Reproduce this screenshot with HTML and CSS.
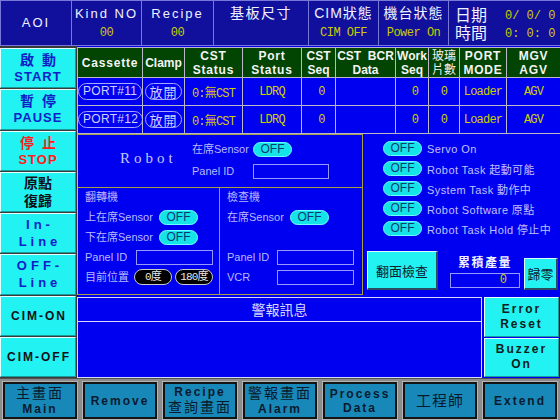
FILE: index.html
```html
<!DOCTYPE html>
<html lang="zh-Hant">
<head>
<meta charset="utf-8">
<title>AOI</title>
<link rel="stylesheet" href="styles.css">
</head>
<body>
<div class="screen">
  <header class="hdr">
    <div class="hc hc-center"><span class="ht">AOI</span></div>
    <div class="hc"><span class="ht">Kind NO</span><span class="hv">00</span></div>
    <div class="hc"><span class="ht">Recipe</span><span class="hv">00</span></div>
    <div class="hc hc-top"><span class="htl wide">基板尺寸</span></div>
    <div class="hc"><span class="htl">CIM狀態</span><span class="hv">CIM OFF</span></div>
    <div class="hc"><span class="htl">機台狀態</span><span class="hv">Power On</span></div>
    <div class="hc-date">
      <span class="dl">日期</span><span class="dv">0/ 0/ 0</span>
      <span class="dl">時間</span><span class="dv">0: 0: 0</span>
    </div>
  </header>

  <div class="mid">
    <nav class="side">
      <button class="sbtn blue"><span class="cj">啟動</span><span class="en">START</span></button>
      <button class="sbtn blue"><span class="cj">暫停</span><span class="en">PAUSE</span></button>
      <button class="sbtn red"><span class="cj">停止</span><span class="en">STOP</span></button>
      <button class="sbtn dark"><span class="cj tight">原點</span><span class="cj tight">復歸</span></button>
      <button class="sbtn blue"><span class="ln">In-</span><span class="ln">Line</span></button>
      <button class="sbtn blue"><span class="ln">OFF-</span><span class="ln">Line</span></button>
      <button class="sbtn dark"><span class="one">CIM-ON</span></button>
      <button class="sbtn dark"><span class="one">CIM-OFF</span></button>
    </nav>

    <main class="content">
      <div class="tablewrap">
        <table class="ports">
          <colgroup>
            <col style="width:65px"><col style="width:42px"><col style="width:58px"><col style="width:59px"><col style="width:34px">
            <col style="width:60px"><col style="width:33px"><col style="width:31px"><col style="width:47px"><col style="width:54px">
          </colgroup>
          <thead>
            <tr>
              <th>Cassette</th><th class="tight">Clamp</th><th>CST<br>Status</th><th>Port<br>Status</th><th class="tight">CST<br>Seq</th>
              <th class="tight">CST&nbsp; BCR<br>Data</th><th class="tight">Work<br>Seq</th><th class="cjk">玻璃<br>片數</th><th>PORT<br>MODE</th><th>MGV<br>AGV</th>
            </tr>
          </thead>
          <tbody>
            <tr>
              <td><span class="opill">PORT#11</span></td><td><span class="opill cj">放開</span></td>
              <td>0:無CST</td><td>LDRQ</td><td class="num">0</td><td></td><td class="num">0</td><td>0</td><td>Loader</td><td>AGV</td>
            </tr>
            <tr>
              <td><span class="opill">PORT#12</span></td><td><span class="opill cj">放開</span></td>
              <td>0:無CST</td><td>LDRQ</td><td class="num">0</td><td></td><td class="num">0</td><td>0</td><td>Loader</td><td>AGV</td>
            </tr>
          </tbody>
        </table>
      </div>

      <section class="robotrow">
        <div class="robot">
          <div class="rtop">
            <div class="rname">Robot</div>
            <div class="rfields">
              <span class="lbl">在席Sensor</span><span class="sw">OFF</span>
              <span class="lbl">Panel ID</span><span class="box w76"></span>
            </div>
          </div>
          <div class="rbot">
            <div class="flip">
              <div class="frow"><span class="lbl">翻轉機</span></div>
              <div class="frow"><span class="lbl w74">上在席Sensor</span><span class="sw">OFF</span></div>
              <div class="frow"><span class="lbl w74">下在席Sensor</span><span class="sw">OFF</span></div>
              <div class="frow"><span class="lbl w51">Panel ID</span><span class="box w77"></span></div>
              <div class="frow"><span class="lbl w49">目前位置</span><span class="ang">0度</span><span class="ang">180度</span></div>
            </div>
            <div class="insp">
              <div class="frow"><span class="lbl">檢查機</span></div>
              <div class="frow"><span class="lbl w63">在席Sensor</span><span class="sw">OFF</span></div>
              <div class="frow"></div>
              <div class="frow"><span class="lbl w50">Panel ID</span><span class="box w77"></span></div>
              <div class="frow"><span class="lbl w50">VCR</span><span class="box w77"></span></div>
            </div>
          </div>
        </div>

        <div class="status">
          <ul class="slist">
            <li><span class="sw">OFF</span><span class="stext">Servo On</span></li>
            <li><span class="sw">OFF</span><span class="stext">Robot Task 起動可能</span></li>
            <li><span class="sw">OFF</span><span class="stext">System Task 動作中</span></li>
            <li><span class="sw">OFF</span><span class="stext">Robot Software 原點</span></li>
            <li><span class="sw">OFF</span><span class="stext">Robot Task Hold 停止中</span></li>
          </ul>
          <div class="actions">
            <button class="cbtn flipbtn">翻面檢查</button>
            <div class="counter">
              <span class="clbl">累積產量</span>
              <span class="cbox">0</span>
            </div>
            <button class="cbtn zero">歸零</button>
          </div>
        </div>
      </section>

      <section class="alarmrow">
        <div class="alarm">
          <div class="ahead">警報訊息</div>
          <div class="abody"></div>
        </div>
        <div class="abtns">
          <button class="abtn">Error<br>Reset</button>
          <button class="abtn">Buzzer<br>On</button>
        </div>
      </section>
    </main>
  </div>

  <footer class="foot">
    <button class="fbtn"><span class="fcj">主畫面</span><span>Main</span></button>
    <button class="fbtn">Remove</button>
    <button class="fbtn"><span>Recipe</span><span class="fcj">查詢畫面</span></button>
    <button class="fbtn"><span class="fcj">警報畫面</span><span>Alarm</span></button>
    <button class="fbtn"><span>Process</span><span>Data</span></button>
    <button class="fbtn"><span class="fcj big">工程師</span></button>
    <button class="fbtn">Extend</button>
  </footer>
</div>
</body>
</html>
```

FILE: styles.css
```css
* { box-sizing: border-box; margin: 0; padding: 0; }

body {
  width: 560px;
  height: 420px;
  overflow: hidden;
  background: #0000f0;
  font-family: "Liberation Sans", "Noto Sans CJK TC", sans-serif;
  color: #c8c8ff;
}

button { font-family: inherit; cursor: default; }

.screen {
  display: grid;
  grid-template-rows: 46px 332px 42px;
  height: 420px;
}

/* ---------- header ---------- */
.hdr {
  display: grid;
  grid-template-columns: 70px 70px 72px 95px 70px 70px 111px;
  background: #10109c;
  border: 1px solid #7878d8;
}
.hc {
  border-left: 1px solid #7878d8;
  display: flex;
  flex-direction: column;
  align-items: center;
  justify-content: space-between;
  padding: 5px 0 5px;
}
.hc:first-child { border-left: none; }
.hc-center { justify-content: center; padding-bottom: 5px; }
.hc-top { justify-content: flex-start; padding-top: 5px; }
.ht {
  font-size: 13px;
  line-height: 16px;
  letter-spacing: 2px;
  color: #f0f0ff;
}
.htl {
  font-size: 14px;
  line-height: 18px;
  letter-spacing: 1px;
  color: #f0f0ff;
  margin-top: -2px;
}
.htl.wide { letter-spacing: 1.5px; }
.hv {
  font-family: "Liberation Mono", monospace;
  font-size: 12px;
  line-height: 14px;
  letter-spacing: -0.5px;
  color: #cccc00;
}
.hc-date {
  border-left: 1px solid #7878d8;
  display: grid;
  grid-template-columns: 50px 1fr;
  grid-template-rows: 18px 18px;
  align-items: center;
  padding: 6px 6px 0 6px;
}
.dl {
  font-size: 16px;
  line-height: 18px;
  color: #f0f0ff;
}
.dv {
  font-family: "Liberation Mono", monospace;
  font-size: 12px;
  line-height: 14px;
  color: #cccc00;
  text-align: right;
  white-space: pre;
}

/* ---------- middle ---------- */
.mid {
  display: grid;
  grid-template-columns: 77px 1fr;
}

.side {
  display: flex;
  flex-direction: column;
  gap: 1px;
  padding: 2px 1px 1px 0;
  background: #3a3a3a;
}
.sbtn {
  flex: 1;
  background: #22f2f2;
  border-top: 1px solid #e6ffff;
  border-left: 1px solid #e6ffff;
  border-bottom: 1px solid #1a9a9a;
  border-right: 1px solid #1a9a9a;
  display: flex;
  flex-direction: column;
  align-items: center;
  justify-content: center;
}
.sbtn .cj {
  font-family: "Liberation Sans", "Noto Sans CJK TC", sans-serif;
  font-size: 14px;
  line-height: 18px;
  letter-spacing: 8px;
  margin-right: -8px;
  font-weight: bold;
}
.sbtn .cj.tight {
  letter-spacing: 0;
  margin-right: 0;
  font-size: 14px;
  line-height: 18px;
}
.sbtn .en {
  font-size: 13px;
  line-height: 16px;
  font-weight: bold;
  letter-spacing: 1px;
}
.sbtn .ln {
  font-size: 13px;
  line-height: 17px;
  letter-spacing: 4px;
  margin-right: -4px;
  font-weight: bold;
}
.sbtn .one {
  font-size: 12px;
  font-weight: bold;
  letter-spacing: 2px;
  margin-right: -2px;
}
.sbtn.blue { color: #1020c8; }
.sbtn.red { color: #ff1c1c; }
.sbtn.dark { color: #101018; }

.content {
  display: grid;
  grid-template-rows: 88px 162px 82px;
  background: #0000f0;
}

/* ---------- port table ---------- */
.tablewrap { padding-top: 1px; }
.ports {
  border-collapse: collapse;
  table-layout: fixed;
  width: 483px;
}
.ports th, .ports td {
  border: 1px solid #b8b8c8;
  text-align: center;
  overflow: hidden;
  white-space: nowrap;
}
.ports th {
  background: #024402;
  color: #f4f4f4;
  font-size: 12px;
  font-weight: bold;
  line-height: 14px;
  letter-spacing: 0.8px;
  height: 30px;
  padding: 0;
}
.ports th.tight { letter-spacing: 0; }
.ports th.cjk {
  font-family: "Liberation Sans", "Noto Sans CJK TC", sans-serif;
  font-size: 12px;
  font-weight: normal;
  letter-spacing: 0;
  line-height: 14px;
}
.ports td {
  background: #0000f0;
  height: 28px;
  color: #d0d000;
  font-family: "Liberation Mono", "Noto Sans CJK TC", monospace;
  font-size: 12px;
  letter-spacing: -0.8px;
  padding: 0;
}
.ports td.num { padding-left: 6px; }
.opill {
  display: inline-block;
  height: 17px;
  line-height: 15px;
  padding: 0 4px;
  border: 1px solid #a8a8ff;
  border-radius: 9px;
  color: #d0d0ff;
  font-family: "Liberation Sans", sans-serif;
  font-size: 12px;
  letter-spacing: 0.3px;
}
.opill.cj {
  font-family: "Noto Sans CJK TC", sans-serif;
  font-size: 13px;
  letter-spacing: 1px;
  padding: 0 3px;
}

/* ---------- robot ---------- */
.robotrow {
  display: grid;
  grid-template-columns: 286px 1fr;
}
.robot {
  display: grid;
  grid-template-rows: 53px 1fr;
  border-top: 1px solid #a8a040;
  border-right: 1px solid #a8a040;
  border-bottom: 1px solid #a8a040;
  border-left: 1px solid #b8b8c8;
  margin-bottom: 1px;
}
.rtop {
  display: flex;
  border-bottom: 1px solid #a8a040;
}
.rname {
  width: 114px;
  padding-left: 42px;
  padding-top: 15px;
  font-family: "Liberation Serif", serif;
  font-size: 15px;
  letter-spacing: 4px;
  color: #c8c8ff;
}
.rfields {
  display: grid;
  grid-template-columns: 61px auto;
  grid-template-rows: 15px 15px;
  row-gap: 7px;
  align-items: center;
  padding-top: 7px;
}
.lbl {
  font-size: 11px;
  line-height: 15px;
  color: #b8b8ff;
  white-space: nowrap;
}
.w74 { width: 74px; }
.w63 { width: 63px; }
.w51 { width: 51px; }
.w50 { width: 50px; }
.w49 { width: 49px; }

.sw {
  display: inline-block;
  flex: none;
  width: 39px;
  height: 15px;
  border-radius: 8px;
  background: #14e4e8;
  border: 1px solid #70ffff;
  color: #103870;
  font-size: 12px;
  line-height: 13px;
  text-align: center;
}
.box {
  display: inline-block;
  flex: none;
  height: 15px;
  border: 1px solid #9898ff;
}
.box.w76 { width: 76px; }
.box.w77 { width: 77px; }

.rbot {
  display: grid;
  grid-template-columns: 142px 1fr;
}
.flip, .insp {
  display: grid;
  grid-template-rows: repeat(5, 16px);
  row-gap: 4px;
  padding: 1px 0 0 7px;
  align-content: start;
}
.flip { border-right: 1px solid #a8a040; }
.frow {
  display: flex;
  align-items: center;
  height: 16px;
}
.ang {
  display: inline-block;
  flex: none;
  width: 38px;
  height: 16px;
  margin-right: 3px;
  border-radius: 8px;
  background: #000;
  border: 1px solid #c8c8c8;
  color: #e8e8e8;
  font-family: "Liberation Mono", "Noto Sans CJK TC", monospace;
  font-size: 11px;
  letter-spacing: -0.8px;
  line-height: 14px;
  text-align: center;
}

/* ---------- status ---------- */
.status {
  display: flex;
  flex-direction: column;
  padding: 7px 0 6px 4px;
}
.slist {
  list-style: none;
  display: flex;
  flex-direction: column;
  gap: 5px;
  padding-left: 16px;
}
.slist li {
  display: flex;
  align-items: center;
  gap: 5px;
  height: 15px;
}
.stext {
  font-size: 11px;
  color: #c0c0ff;
  white-space: nowrap;
  letter-spacing: 0.4px;
}
.actions {
  margin-top: auto;
  display: flex;
  align-items: flex-end;
}
.cbtn {
  background: #22f2f2;
  border-top: 1px solid #d8ffff;
  border-left: 1px solid #d8ffff;
  border-right: 2px solid #2a4a60;
  border-bottom: 2px solid #2a4a60;
  color: #102030;
  font-family: "Noto Sans CJK TC", sans-serif;
  font-size: 13px;
}
.flipbtn { width: 71px; height: 39px; }
.zero { width: 34px; height: 32px; margin-left: 4px; }
.counter {
  display: flex;
  flex-direction: column;
  align-items: center;
  width: 70px;
  margin-left: 12px;
  margin-bottom: 2px;
  gap: 2px;
}
.clbl {
  font-size: 12px;
  line-height: 15px;
  font-weight: bold;
  letter-spacing: 1.5px;
  color: #f0f0ff;
}
.cbox {
  width: 70px;
  height: 15px;
  border: 1px solid #9898ff;
  text-align: right;
  padding-right: 12px;
  color: #d0d000;
  font-family: "Liberation Mono", monospace;
  font-size: 12px;
  line-height: 13px;
}

/* ---------- alarm ---------- */
.alarmrow {
  display: grid;
  grid-template-columns: 405px 1fr;
}
.alarm {
  margin-top: 1px;
  border: 1px solid #d8d8ff;
  display: grid;
  grid-template-rows: 24px 1fr;
}
.ahead {
  border-bottom: 1px solid #d8d8ff;
  text-align: center;
  font-family: "Noto Sans CJK TC", sans-serif;
  font-size: 14px;
  line-height: 22px;
  color: #d8d8ff;
}
.abtns {
  display: flex;
  flex-direction: column;
  gap: 1px;
  padding: 1px 2px 1px 2px;
  background: #0000f0;
}
.abtn {
  flex: 1;
  background: #22f2f2;
  border-top: 1px solid #e6ffff;
  border-left: 1px solid #e6ffff;
  border-bottom: 1px solid #1a9a9a;
  border-right: 1px solid #1a9a9a;
  color: #102020;
  font-size: 12px;
  font-weight: bold;
  letter-spacing: 2px;
  line-height: 15px;
}

/* ---------- footer ---------- */
.foot {
  display: flex;
  gap: 6px;
  padding: 3px 3px 2px 3px;
  background: #8c8c8c;
  border-top: 1px solid #505050;
}
.fbtn {
  width: 74px;
  height: 37px;
  background: #1888b8;
  border: 2px solid #141414;
  box-shadow: 0 0 0 1px #b4b4b4;
  color: #0a1a2e;
  font-size: 12px;
  font-weight: bold;
  letter-spacing: 2px;
  line-height: 14px;
  display: flex;
  flex-direction: column;
  align-items: center;
  justify-content: center;
}
.fbtn .fcj {
  font-family: "Liberation Sans", "Noto Sans CJK TC", sans-serif;
  font-size: 14px;
  font-weight: normal;
  line-height: 17px;
  letter-spacing: 2px;
}
.fbtn .fcj.big { font-size: 15px; letter-spacing: 1px; }
```
